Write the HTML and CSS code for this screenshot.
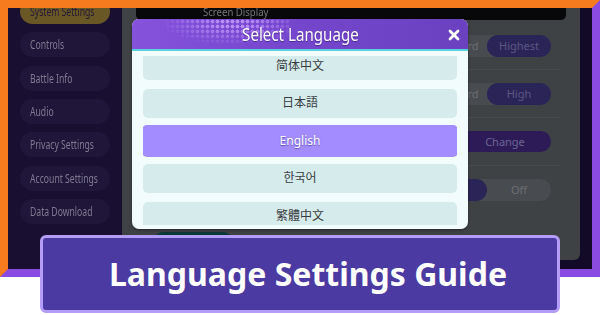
FILE: index.html
```html
<!DOCTYPE html>
<html lang="en">
<head>
    <meta charset="UTF-8">
    <meta name="viewport" content="width=device-width, initial-scale=1.0">
    <title>Language Settings Guide</title>
    <link rel="stylesheet" href="styles.css">
</head>
<body>
    <div class="frame">
        <div class="screen">
            <aside class="sidebar">
                <div class="nav-item active"><span>System Settings</span></div>
                <div class="nav-item"><span>Controls</span></div>
                <div class="nav-item"><span>Battle Info</span></div>
                <div class="nav-item"><span>Audio</span></div>
                <div class="nav-item"><span>Privacy Settings</span></div>
                <div class="nav-item"><span>Account Settings</span></div>
                <div class="nav-item"><span>Data Download</span></div>
            </aside>

            <main class="main">
                <div class="tabbar"><span>Screen Display</span></div>
                <div class="rows">
                    <div class="row">
                        <div class="seg">
                            <span class="opt">Standard</span>
                            <span class="opt on">Highest</span>
                        </div>
                    </div>
                    <div class="row">
                        <div class="seg">
                            <span class="opt">Standard</span>
                            <span class="opt on">High</span>
                        </div>
                    </div>
                    <div class="row">
                        <div class="change-btn">Change</div>
                    </div>
                    <div class="row">
                        <div class="seg">
                            <span class="opt on">On</span>
                            <span class="opt">Off</span>
                        </div>
                    </div>
                </div>
                <div class="bottom-btn"></div>
            </main>
            <div class="edge"></div>
        </div>

        <!-- language picker -->
        <div class="modal">
            <div class="modal-header">
                <span class="modal-title">Select Language</span>
                <svg class="modal-close" width="12" height="12" viewBox="0 0 12 12">
                    <path d="M2 2 L10 10 M10 2 L2 10" stroke="#ffffff" stroke-width="2.8" stroke-linecap="round"/>
                </svg>
            </div>
            <div class="modal-body">
                <div class="lang-list">
                    <div class="lang" lang="zh-CN">简体中文</div>
                    <div class="lang" lang="ja">日本語</div>
                    <div class="lang selected">English</div>
                    <div class="lang" lang="ko">한국어</div>
                    <div class="lang" lang="zh-TW">繁體中文</div>
                </div>
            </div>
        </div>
    </div>

    <div class="banner">Language Settings Guide</div>
</body>
</html>
```

FILE: styles.css
```css
body {
    margin: 0;
    width: 600px;
    height: 315px;
    overflow: hidden;
    background-color: #ffffff;
    font-family: "Noto Sans", "Noto Sans CJK JP", sans-serif;
    position: relative;
}
.frame {
    position: relative;
    width: 584px;
    height: 261px;
    border: 8px solid;
    border-color: #f57b1e #8a4ce0 #8a4ce0 #f57b1e;
}
.screen {
    display: grid;
    grid-template-columns: 114px 458px 12px;
    height: 261px;
    overflow: hidden;
    background-color: #120a26;
}
.sidebar {
    background-color: #190f30;
    padding-left: 12px;
    display: flex;
    flex-direction: column;
    gap: 8.33px;
}
.nav-item {
    width: 90px;
    height: 25px;
    border-radius: 13px;
    background-color: #20163a;
    color: #7e7a90;
    font-size: 12px;
    line-height: 25px;
    padding-left: 10px;
    box-sizing: border-box;
    white-space: nowrap;
}
.nav-item span {
    display: inline-block;
    transform: scaleX(0.72);
    transform-origin: left center;
}
.nav-item:first-child {
    margin-top: -9px;
}
.nav-item.active {
    background-color: #6a5726;
    color: #231a36;
}
.main {
    height: 252px;
    background-color: #3f4245;
    border-bottom-right-radius: 6px;
    display: flex;
    flex-direction: column;
}
.tabbar {
    height: 12px;
    margin: 0 14px;
    background-color: #08080a;
    border-radius: 0 0 5px 5px;
    padding-left: 67px;
    overflow: hidden;
}
.tabbar span {
    display: block;
    width: max-content;
    margin-top: -2px;
    color: #75777a;
    font-size: 11px;
    line-height: 12px;
    transform: scaleX(0.87);
    transform-origin: left center;
}
.rows {
    margin: 2px 20px 0 14px;
}
.row {
    height: 48px;
    display: flex;
    align-items: center;
    justify-content: flex-end;
    padding-right: 9px;
    border-bottom: 1px solid #464a4d;
    box-sizing: border-box;
}
.row:last-child {
    border-bottom: none;
}
.seg {
    display: flex;
    height: 22px;
    border-radius: 11px;
    background-color: #484b4f;
}
.opt {
    width: 64px;
    border-radius: 11px;
    color: #6c6f73;
    font-size: 11px;
    line-height: 22px;
    text-align: center;
}
.opt.on {
    background-color: #2b2456;
    color: #5c5884;
}
.change-btn {
    width: 92px;
    height: 21px;
    border-radius: 11px;
    background-color: #2d1b58;
    color: #6c6592;
    font-size: 11px;
    line-height: 21px;
    text-align: center;
}
.bottom-btn {
    width: 80px;
    height: 20px;
    margin: 18px 0 0 31px;
    border-radius: 10px;
    background-color: #0b3a36;
}
.edge {
    background-color: #120a26;
}

/* modal */
.modal {
    position: absolute;
    left: 124px;
    top: 11px;
    width: 336px;
    height: 210px;
    border-radius: 7px;
    background-color: #f2fcfc;
    overflow: hidden;
    box-shadow: 0 1px 3px rgba(0, 0, 0, 0.4);
}
.modal-header {
    position: relative;
    height: 30px;
    background: linear-gradient(90deg, #8552dc 0%, #7446cc 50%, #6a41bf 100%);
    border-bottom: 2px solid #5ad2de;
    display: flex;
    align-items: center;
    justify-content: center;
    overflow: hidden;
}
.modal-header::before {
    content: "";
    position: absolute;
    left: 8px;
    top: 0;
    width: 150px;
    height: 30px;
    background-image: radial-gradient(circle, rgba(200, 160, 255, 0.8) 1.7px, transparent 2.2px);
    background-size: 5px 5px;
    -webkit-mask-image: radial-gradient(ellipse 60% 90% at 62% 15%, #000 15%, transparent 80%);
    mask-image: radial-gradient(ellipse 60% 90% at 62% 15%, #000 15%, transparent 80%);
}
.modal-title {
    position: relative;
    display: inline-block;
    color: #ffffff;
    font-size: 18px;
    line-height: 22px;
    transform: scaleX(0.84);
    text-shadow: 0 1px 1px rgba(40, 10, 90, 0.5);
}
.modal-close {
    position: absolute;
    right: 8px;
    top: 10px;
}
.modal-body {
    padding: 5px 11px 4px;
}
.lang-list {
    height: 169px;
    overflow: hidden;
    display: flex;
    flex-direction: column;
    gap: 9px;
}
.lang {
    flex: none;
    height: 28.5px;
    border-radius: 5px;
    background-color: #d5ebec;
    color: #3a3d40;
    font-size: 12px;
    line-height: 28px;
    text-align: center;
}
.lang:first-child {
    margin-top: -4.5px;
}
.lang.selected {
    height: 32px;
    margin: -1.75px -1px;
    line-height: 32px;
    background-color: #a28cff;
    color: #ffffff;
    text-shadow: 0 1px 1px rgba(60, 40, 120, 0.6);
}

.banner {
    position: absolute;
    left: 40px;
    top: 235px;
    width: 520px;
    height: 78px;
    box-sizing: border-box;
    border: 3px solid #b39df6;
    border-radius: 6px;
    background-color: #4b3aa1;
    color: #ffffff;
    font-size: 32px;
    font-weight: bold;
    display: flex;
    align-items: center;
    justify-content: center;
    padding-left: 16px;
    padding-bottom: 2px;
}
```
